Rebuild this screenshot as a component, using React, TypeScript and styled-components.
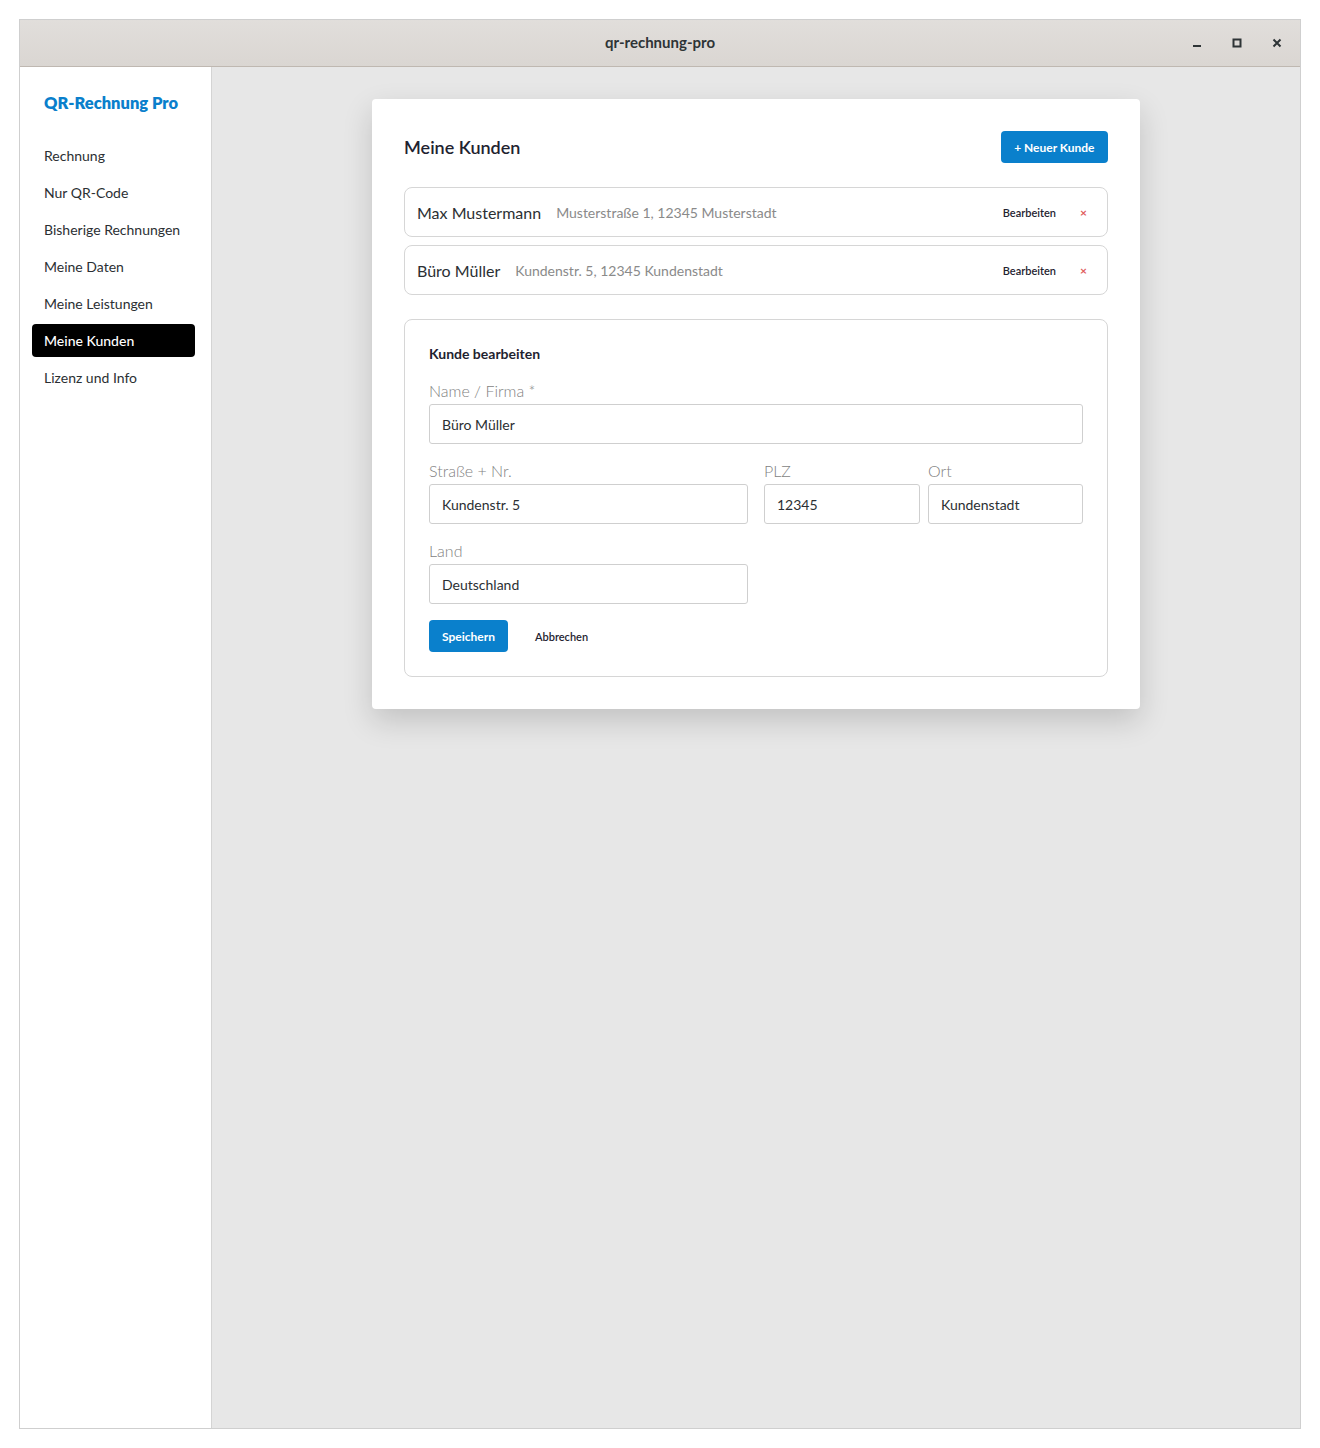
import styled, { createGlobalStyle } from "styled-components";

const GlobalStyle = createGlobalStyle`
  html, body {
    margin: 0;
    padding: 0;
    background: #ffffff;
  }
  body {
    font-family: Lato, "Noto Sans", "Liberation Sans", sans-serif;
    color: #1f2328;
  }
  * {
    box-sizing: border-box;
  }
`;

const navItems = [
  "Rechnung",
  "Nur QR-Code",
  "Bisherige Rechnungen",
  "Meine Daten",
  "Meine Leistungen",
  "Meine Kunden",
  "Lizenz und Info",
];

const customers = [
  { name: "Max Mustermann", address: "Musterstraße 1, 12345 Musterstadt" },
  { name: "Büro Müller", address: "Kundenstr. 5, 12345 Kundenstadt" },
];

export default function App() {
  return (
    <>
      <GlobalStyle />
      <Page>
        <Window>
          <TitleBar>
            <TitleText>qr-rechnung-pro</TitleText>
            <Controls>
              <ControlButton aria-label="minimieren">
                <svg width="10" height="10" viewBox="0 0 10 10">
                  <rect x="1" y="7" width="8" height="2" fill="#2e3436" />
                </svg>
              </ControlButton>
              <ControlButton aria-label="maximieren">
                <svg width="10" height="10" viewBox="0 0 10 10">
                  <rect x="1.5" y="1.5" width="7" height="7" fill="none" stroke="#2e3436" strokeWidth="2" />
                </svg>
              </ControlButton>
              <ControlButton aria-label="schließen">
                <svg width="10" height="10" viewBox="0 0 10 10">
                  <path d="M1.5 1.5 L8.5 8.5 M8.5 1.5 L1.5 8.5" stroke="#2e3436" strokeWidth="2" />
                </svg>
              </ControlButton>
            </Controls>
          </TitleBar>
          <Body>
            <Sidebar>
              <Brand>QR-Rechnung Pro</Brand>
              <NavList>
                {navItems.map((item) => (
                  <NavItem key={item} $active={item === "Meine Kunden"}>
                    {item}
                  </NavItem>
                ))}
              </NavList>
            </Sidebar>
            <Main>
              <Card>
                <CardHeader>
                  <CardTitle>Meine Kunden</CardTitle>
                  <PrimaryButton>+ Neuer Kunde</PrimaryButton>
                </CardHeader>
                <CustomerList>
                  {customers.map((c) => (
                    <CustomerRow key={c.name}>
                      <CustomerName>{c.name}</CustomerName>
                      <CustomerAddress>{c.address}</CustomerAddress>
                      <RowActions>
                        <LinkButton>Bearbeiten</LinkButton>
                        <DeleteButton>×</DeleteButton>
                      </RowActions>
                    </CustomerRow>
                  ))}
                </CustomerList>
                <EditPanel>
                  <PanelTitle>Kunde bearbeiten</PanelTitle>
                  <Field>
                    <Label>Name / Firma *</Label>
                    <Input defaultValue="Büro Müller" />
                  </Field>
                  <AddressRow>
                    <Field>
                      <Label>Straße + Nr.</Label>
                      <Input defaultValue="Kundenstr. 5" />
                    </Field>
                    <Field>
                      <Label>PLZ</Label>
                      <Input defaultValue="12345" />
                    </Field>
                    <Field>
                      <Label>Ort</Label>
                      <Input defaultValue="Kundenstadt" />
                    </Field>
                  </AddressRow>
                  <HalfRow>
                    <Field>
                      <Label>Land</Label>
                      <Input defaultValue="Deutschland" />
                    </Field>
                  </HalfRow>
                  <FormActions>
                    <SaveButton>Speichern</SaveButton>
                    <LinkButton>Abbrechen</LinkButton>
                  </FormActions>
                </EditPanel>
              </Card>
            </Main>
          </Body>
        </Window>
      </Page>
    </>
  );
}

const Page = styled.div`
  padding: 19px;
  height: 1448px;
`;

const Window = styled.div`
  display: flex;
  flex-direction: column;
  height: 1410px;
  border: 1px solid #cfcfcf;
  background: #e7e7e7;
`;

const TitleBar = styled.div`
  position: relative;
  display: flex;
  align-items: center;
  justify-content: center;
  height: 47px;
  flex-shrink: 0;
  background: linear-gradient(#e1dedb, #dad6d2);
  border-bottom: 1px solid #bfb8b1;
`;

const TitleText = styled.div`
  font-size: 15px;
  font-weight: 700;
  color: #2e3436;
  margin-top: -2px;
`;

const Controls = styled.div`
  position: absolute;
  right: 11px;
  top: 0;
  bottom: 0;
  display: flex;
  align-items: center;
  gap: 16px;
`;

const ControlButton = styled.div`
  width: 24px;
  height: 24px;
  display: flex;
  align-items: center;
  justify-content: center;
`;

const Body = styled.div`
  display: flex;
  flex: 1;
  min-height: 0;
`;

const Sidebar = styled.nav`
  width: 192px;
  flex-shrink: 0;
  background: #ffffff;
  border-right: 1px solid #d4d4d4;
  padding: 26px 16px 0 12px;
`;

const Brand = styled.div`
  font-size: 16.5px;
  font-weight: 800;
  color: #0a7fcc;
  padding-left: 12px;
  margin-bottom: 26px;
`;

const NavList = styled.div`
  display: flex;
  flex-direction: column;
  gap: 4px;
`;

const NavItem = styled.div<{ $active?: boolean }>`
  height: 33px;
  display: flex;
  align-items: center;
  padding: 0 12px;
  border-radius: 4px;
  font-size: 14px;
  color: ${(p) => (p.$active ? "#ffffff" : "#2b2f33")};
  background: ${(p) => (p.$active ? "#000000" : "transparent")};
  font-weight: ${(p) => (p.$active ? 500 : 400)};
`;

const Main = styled.main`
  flex: 1;
  display: flex;
  justify-content: center;
  align-items: flex-start;
  padding-top: 32px;
`;

const Card = styled.section`
  width: 768px;
  background: #ffffff;
  border-radius: 4px;
  padding: 32px;
  box-shadow: 0 12px 30px rgba(0, 0, 0, 0.16);
`;

const CardHeader = styled.div`
  display: flex;
  align-items: center;
  justify-content: space-between;
  margin-bottom: 24px;
`;

const CardTitle = styled.h2`
  margin: 0;
  font-size: 18px;
  font-weight: 600;
  color: #1f2330;
`;

const PrimaryButton = styled.button`
  height: 32px;
  padding: 0 13.5px;
  border: none;
  border-radius: 4px;
  background: #0a80cc;
  color: #ffffff;
  font-family: inherit;
  font-size: 12px;
  font-weight: 700;
`;

const CustomerList = styled.div`
  display: flex;
  flex-direction: column;
  gap: 8px;
  margin-bottom: 24px;
`;

const CustomerRow = styled.div`
  display: flex;
  align-items: center;
  height: 50px;
  padding: 0 12px;
  border: 1px solid #d6d6d6;
  border-radius: 8px;
`;

const CustomerName = styled.span`
  font-size: 16px;
  color: #2b2f33;
  margin-right: 15px;
`;

const CustomerAddress = styled.span`
  font-size: 14px;
  color: #8a8a8a;
`;

const RowActions = styled.div`
  margin-left: auto;
  display: flex;
  align-items: center;
  gap: 4px;
`;

const LinkButton = styled.button`
  background: none;
  border: none;
  padding: 8px 12px;
  font-family: inherit;
  font-size: 11px;
  font-weight: 600;
  color: #1f2330;
`;

const DeleteButton = styled.button`
  background: none;
  border: none;
  padding: 4px 8px;
  font-family: inherit;
  font-size: 12px;
  font-weight: 700;
  color: #e05a5a;
`;

const EditPanel = styled.div`
  border: 1px solid #d6d6d6;
  border-radius: 8px;
  padding: 24px;
  display: flex;
  flex-direction: column;
`;

const PanelTitle = styled.div`
  font-size: 14px;
  font-weight: 700;
  color: #1f2330;
  margin-top: 1px;
  margin-bottom: 18px;
`;

const Field = styled.label`
  display: flex;
  flex-direction: column;
  min-width: 0;
`;

const Label = styled.span`
  font-size: 16px;
  font-weight: 300;
  color: #7f7f7f;
  line-height: 22px;
  margin-bottom: 2px;
`;

const Input = styled.input`
  height: 40px;
  width: 100%;
  padding: 0 12px;
  border: 1px solid #cfcfcf;
  border-radius: 3px;
  font-family: inherit;
  font-size: 14px;
  color: #2b2f33;
  outline: none;
`;

const AddressRow = styled.div`
  display: grid;
  grid-template-columns: 327px 156px 1fr;
  gap: 8px;
  margin-top: 16px;

  & > :first-child {
    margin-right: 8px;
  }
`;

const HalfRow = styled.div`
  width: 319px;
  margin-top: 16px;
`;

const FormActions = styled.div`
  display: flex;
  align-items: center;
  gap: 15px;
  margin-top: 16px;
`;

const SaveButton = styled(PrimaryButton)`
  padding: 0 13px;
`;
